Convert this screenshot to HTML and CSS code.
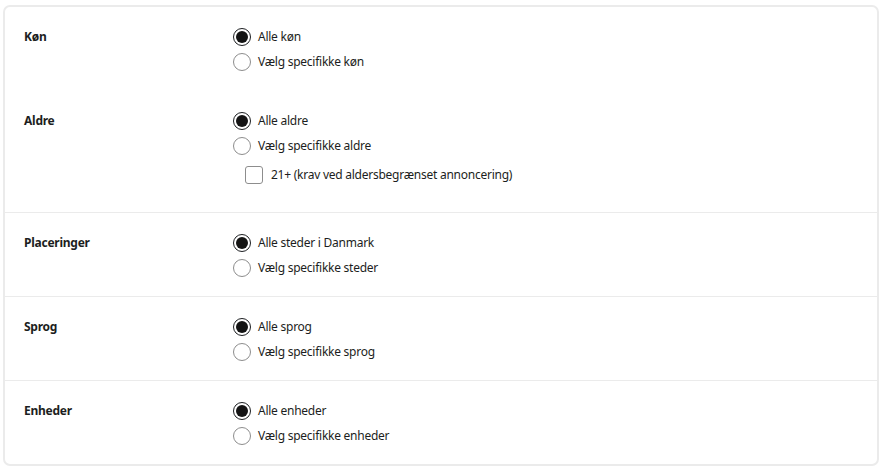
FILE: index.html
```html
<!DOCTYPE html>
<html lang="da">
<head>
    <meta charset="UTF-8">
    <meta name="viewport" content="width=device-width, initial-scale=1.0">
    <title>Målgruppe</title>
    <link rel="stylesheet" href="styles.css">
</head>
<body>
    <div class="card">
        <div class="section">
            <div class="field">
                <div class="label">Køn</div>
                <div class="options">
                    <label class="option"><span class="radio checked"></span>Alle køn</label>
                    <label class="option"><span class="radio"></span>Vælg specifikke køn</label>
                </div>
            </div>
            <div class="field spaced">
                <div class="label">Aldre</div>
                <div class="options">
                    <label class="option"><span class="radio checked"></span>Alle aldre</label>
                    <label class="option"><span class="radio"></span>Vælg specifikke aldre</label>
                    <label class="option sub"><span class="checkbox"></span>21+ (krav ved aldersbegrænset annoncering)</label>
                </div>
            </div>
        </div>
        <div class="section">
            <div class="field">
                <div class="label">Placeringer</div>
                <div class="options">
                    <label class="option"><span class="radio checked"></span>Alle steder i Danmark</label>
                    <label class="option"><span class="radio"></span>Vælg specifikke steder</label>
                </div>
            </div>
        </div>
        <div class="section">
            <div class="field">
                <div class="label">Sprog</div>
                <div class="options">
                    <label class="option"><span class="radio checked"></span>Alle sprog</label>
                    <label class="option"><span class="radio"></span>Vælg specifikke sprog</label>
                </div>
            </div>
        </div>
        <div class="section">
            <div class="field">
                <div class="label">Enheder</div>
                <div class="options">
                    <label class="option"><span class="radio checked"></span>Alle enheder</label>
                    <label class="option"><span class="radio"></span>Vælg specifikke enheder</label>
                </div>
            </div>
        </div>
    </div>
</body>
</html>
```

FILE: styles.css
```css
body {
    font-family: "Noto Sans", Arial, sans-serif;
    font-size: 12px;
    letter-spacing: -0.25px;
    color: #1c1e21;
    margin: 5px 4px 4px 3px;
    background: #fff;
}
.card {
    border: 2px solid #ebebeb;
    border-radius: 7px;
    background: #fff;
}
.section {
    padding: 17px 19px 16px 19px;
    border-top: 1px solid #ebebeb;
}
.section:first-child {
    border-top: none;
    padding-bottom: 25px;
}
.field {
    display: grid;
    grid-template-columns: 209px 1fr;
}
.field.spaced {
    margin-top: 34px;
}
.label {
    font-weight: bold;
    line-height: 25px;
}
.options {
    display: flex;
    flex-direction: column;
}
.option {
    display: flex;
    align-items: center;
    height: 25px;
    gap: 7px;
}
.option.sub {
    margin-top: 4px;
    padding-left: 12px;
    gap: 8px;
}
.radio {
    width: 16px;
    height: 16px;
    border: 1px solid #8d8d8d;
    border-radius: 50%;
    box-sizing: content-box;
    position: relative;
    flex: none;
}
.radio.checked {
    border-color: #1c1e21;
}
.radio.checked::after {
    content: "";
    position: absolute;
    left: 2px;
    top: 2px;
    width: 12px;
    height: 12px;
    border-radius: 50%;
    background: #141414;
}
.checkbox {
    width: 16px;
    height: 16px;
    border: 1px solid #8d8d8d;
    border-radius: 3px;
    flex: none;
}
```
